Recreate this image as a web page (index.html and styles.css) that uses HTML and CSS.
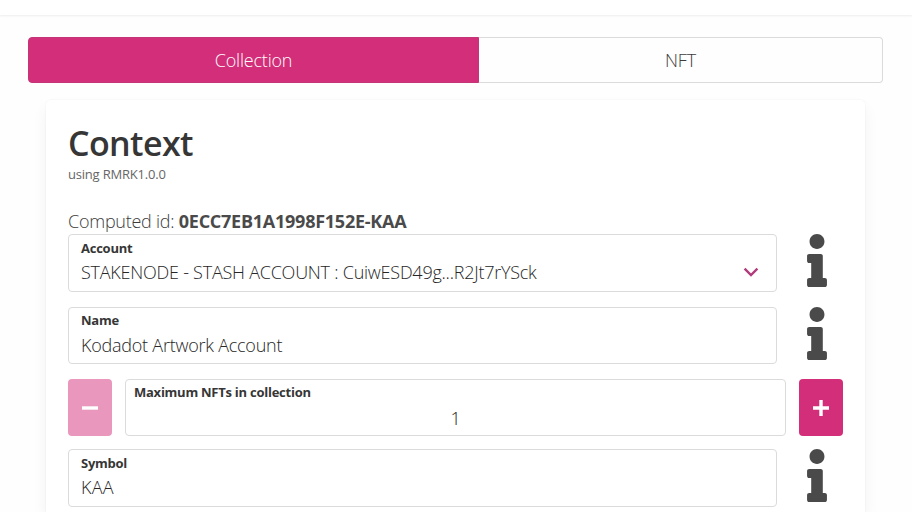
FILE: index.html
```html
<!DOCTYPE html>
<html lang="en">
<head>
<meta charset="utf-8">
<title>Create collection</title>
<link rel="stylesheet" href="styles.css">
</head>
<body>
<svg class="defs" aria-hidden="true"><symbol id="info" viewBox="0 0 192 512"><path d="M20 424.229h20V279.771H20c-11.046 0-20-8.954-20-20V212c0-11.046 8.954-20 20-20h112c11.046 0 20 8.954 20 20v212.229h20c11.046 0 20 8.954 20 20V492c0 11.046-8.954 20-20 20H20c-11.046 0-20-8.954-20-20v-47.771c0-11.046 8.954-20 20-20zM96 0C56.235 0 24 32.235 24 72s32.235 72 72 72 72-32.235 72-72S135.764 0 96 0z"/></symbol></svg>
<header class="topbar"></header>
<main>
<nav class="tabs"><a class="tab active">Collection</a><a class="tab">NFT</a></nav>
<section class="card">
<h1>Context</h1>
<p class="sub">using RMRK1.0.0</p>
<p class="computed">Computed id: <b>0ECC7EB1A1998F152E-KAA</b></p>
<div class="row account">
<div class="field"><label>Account</label><div class="value">STAKENODE - STASH ACCOUNT : CuiwESD49g...R2Jt7rYSck</div>
<svg class="chevron" viewBox="0 0 16 10"><path d="M1.6 1.6 8 8l6.400-6.400"/></svg></div>
<svg class="info"><use href="#info"/></svg>
</div>
<div class="row name">
<div class="field"><label>Name</label><div class="value">Kodadot Artwork Account</div></div>
<svg class="info"><use href="#info"/></svg>
</div>
<div class="row stepper">
<button class="step" disabled><svg viewBox="0 0 16 16"><path d="M0 8h16"/></svg></button>
<div class="field number"><label>Maximum NFTs in collection</label><div class="value">1</div></div>
<button class="step"><svg viewBox="0 0 16 16"><path d="M0 8h16M8 0v16"/></svg></button>
</div>
<div class="row symbol">
<div class="field"><label>Symbol</label><div class="value code">KAA</div></div>
<svg class="info"><use href="#info"/></svg>
</div>
</section>
</main>
</body>
</html>
```
FILE: styles.css
```css
* { box-sizing: border-box; }
body { margin: 0; background: #fefefe; color: #3c3c3c; font: 350 18px/26px "Open Sans", "Noto Sans", sans-serif; }
.defs { position: absolute; width: 0; height: 0; }
.topbar { height: 15px; background: #fff; box-shadow: 0 1px 2px rgba(10,10,10,.07); }
main { padding: 22px 29px 0 28px; }
.tabs { display: flex; height: 46px; letter-spacing: -.2px; }
.tab { flex: 1; display: flex; align-items: center; justify-content: center; border: 1px solid #dbdbdb; border-left: 0; border-radius: 0 4px 4px 0; }
.tab.active { flex: 0 0 451px; background: #d32e79; border: 1px solid #c43576; color: #fff; border-radius: 4px 0 0 4px; }
.card { margin: 17px 18px 0; padding: 22px 22px 0; height: 412px; background: #fff; border-radius: 5px 5px 0 0; box-shadow: 0 8px 16px rgba(10,10,10,.05), 0 0 0 1px rgba(10,10,10,.015); }
h1 { margin: 0; font-size: 34px; line-height: 43px; font-weight: 600; color: #363636; letter-spacing: -.6px; }
p { margin: 0; }
.sub { font-size: 13px; line-height: 18px; font-weight: 400; color: #666; letter-spacing: -.2px; }
.computed { margin-top: 26px; height: 25px; line-height: 24px; white-space: nowrap; letter-spacing: -.25px; }
b { font-weight: 700; color: #4a4a4a; }
.row { display: flex; height: 58px; }
.name { margin-top: 15px; height: 57px; }
.stepper { margin-top: 15px; height: 57px; gap: 13px; }
.symbol { margin-top: 13px; }
.field { position: relative; flex: 0 0 709px; border: 1px solid #dbdbdb; border-radius: 4px; background: #fff; padding: 4px 12px; }
.field.number { flex: 1; padding: 3px 8px; }
label { display: block; height: 19px; font-size: 13px; line-height: 19px; font-weight: 700; color: #363636; letter-spacing: -.25px; }
.name label { line-height: 17px; }
.value { color: #262626; line-height: 28px; white-space: nowrap; letter-spacing: -.24px; }
.value.code { letter-spacing: .25px; }
.number .value { text-align: center; line-height: 32px; }
.chevron { position: absolute; right: 17px; top: 32px; width: 16px; height: 10px; fill: none; stroke: #b13c7b; stroke-width: 2.4; }
.info { width: 20px; height: 53px; margin-left: 30px; fill: #4a4a4a; }
.step { display: flex; align-items: center; justify-content: center; width: 44px; border: 0; border-radius: 4px; padding: 0; background: #d32e79; }
.step:disabled { background: #e997bd; }
.step svg { width: 16px; height: 16px; stroke: #fff; stroke-width: 3.4; }
```
